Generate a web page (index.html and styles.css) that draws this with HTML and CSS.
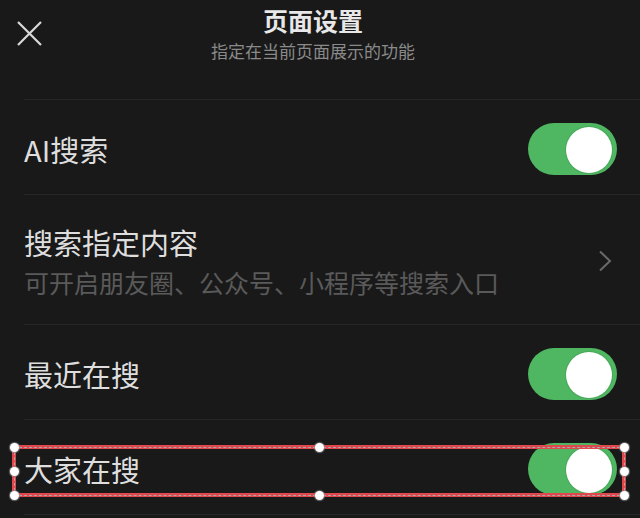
FILE: index.html
```html
<!DOCTYPE html>
<html lang="zh-CN">
<head>
    <meta charset="UTF-8">
    <meta name="viewport" content="width=device-width, initial-scale=1.0">
    <title>页面设置</title>
    <link rel="stylesheet" href="styles.css">
</head>
<body>
    <div class="page">
        <div class="header">
            <a href="#" class="close" aria-label="关闭">
                <svg width="25" height="25" viewBox="0 0 25 25">
                    <path d="M1 1 L24 24 M24 1 L1 24" stroke="#d9d9d9" stroke-width="2.2" fill="none"/>
                </svg>
            </a>
            <div class="headline">
                <h2>页面设置</h2>
                <p>指定在当前页面展示的功能</p>
            </div>
        </div>

        <div class="list">
            <div class="row">
                <span class="label">AI搜索</span>
                <div class="switch on"><span class="knob"></span></div>
            </div>

            <div class="row row-tall">
                <div class="text">
                    <span class="label">搜索指定内容</span>
                    <span class="desc">可开启朋友圈、公众号、小程序等搜索入口</span>
                </div>
                <svg class="chevron" width="14" height="22" viewBox="0 0 14 22">
                    <path d="M2 1.5 L12 11 L2 20.5" stroke="#6a6a6a" stroke-width="2" fill="none"/>
                </svg>
            </div>

            <div class="row">
                <span class="label">最近在搜</span>
                <div class="switch on"><span class="knob"></span></div>
            </div>

            <div class="row row-selected">
                <span class="label">大家在搜</span>
                <div class="switch on"><span class="knob"></span></div>
                <!-- editor selection frame -->
                <div class="selection">
                    <span class="handle tl"></span>
                    <span class="handle tm"></span>
                    <span class="handle tr"></span>
                    <span class="handle ml"></span>
                    <span class="handle mr"></span>
                    <span class="handle bl"></span>
                    <span class="handle bm"></span>
                    <span class="handle br"></span>
                </div>
            </div>

            <div class="row row-end"></div>
        </div>
    </div>
</body>
</html>
```

FILE: styles.css
```css
body {
    font-family: "Noto Sans CJK SC", "Noto Sans", sans-serif;
    margin: 0;
    padding: 0;
    background-color: #191919;
    color: #dedede;
}

.page {
    width: 640px;
    height: 518px;
    overflow: hidden;
}

.header {
    display: grid;
    grid-template-columns: 46px 1fr 60px;
    height: 99px;
    box-sizing: border-box;
}

.close {
    display: block;
    margin: 21px 0 0 17px;
    width: 25px;
    height: 25px;
}

.headline {
    text-align: center;
    padding-top: 2px;
}

.headline h2 {
    margin: 0;
    font-size: 25px;
    line-height: 36px;
    font-weight: bold;
    color: #e8e8e8;
}

.headline p {
    margin: 0;
    font-size: 17px;
    line-height: 25px;
    color: #8a8a8a;
}

.list {
    margin-left: 24px;
}

.row {
    position: relative;
    display: flex;
    align-items: center;
    justify-content: space-between;
    height: 95px;
    box-sizing: border-box;
    border-top: 1px solid #262626;
    padding: 4px 23px 0 0;
}

.row-tall {
    height: 130px;
    padding-top: 2px;
    padding-right: 28px;
}

.label {
    font-size: 29px;
    line-height: 36px;
    color: #dedede;
}

.text {
    display: flex;
    flex-direction: column;
    gap: 6px;
}

.desc {
    font-size: 25px;
    line-height: 32px;
    color: #5a5a5a;
}

.switch {
    width: 89px;
    height: 52px;
    border-radius: 26px;
    background-color: #4fb661;
    position: relative;
}

.switch .knob {
    position: absolute;
    top: 4px;
    right: 5px;
    width: 46px;
    height: 46px;
    border-radius: 50%;
    background-color: #fff;
    box-shadow: 0 0 0 1px #48a85a;
}

.selection {
    position: absolute;
    left: -12px;
    right: 14px;
    top: 25px;
    height: 52px;
    box-sizing: border-box;
    border: 4px solid #e0484d;
}

.selection::after {
    content: '';
    position: absolute;
    inset: -2.5px;
    border: 1px dashed #a9a9a9;
}

.handle {
    position: absolute;
    width: 9px;
    height: 9px;
    border-radius: 50%;
    background-color: #fff;
    box-shadow: 0 0 1px 1px rgba(140, 140, 140, 0.7);
    z-index: 1;
}

.handle.tl { top: -6.5px; left: -6.5px; }
.handle.tm { top: -6.5px; left: calc(50% - 4.5px); }
.handle.tr { top: -6.5px; right: -6.5px; }
.handle.ml { top: calc(50% - 4.5px); left: -6.5px; }
.handle.mr { top: calc(50% - 4.5px); right: -6.5px; }
.handle.bl { bottom: -6.5px; left: -6.5px; }
.handle.bm { bottom: -6.5px; left: calc(50% - 4.5px); }
.handle.br { bottom: -6.5px; right: -6.5px; }
```
